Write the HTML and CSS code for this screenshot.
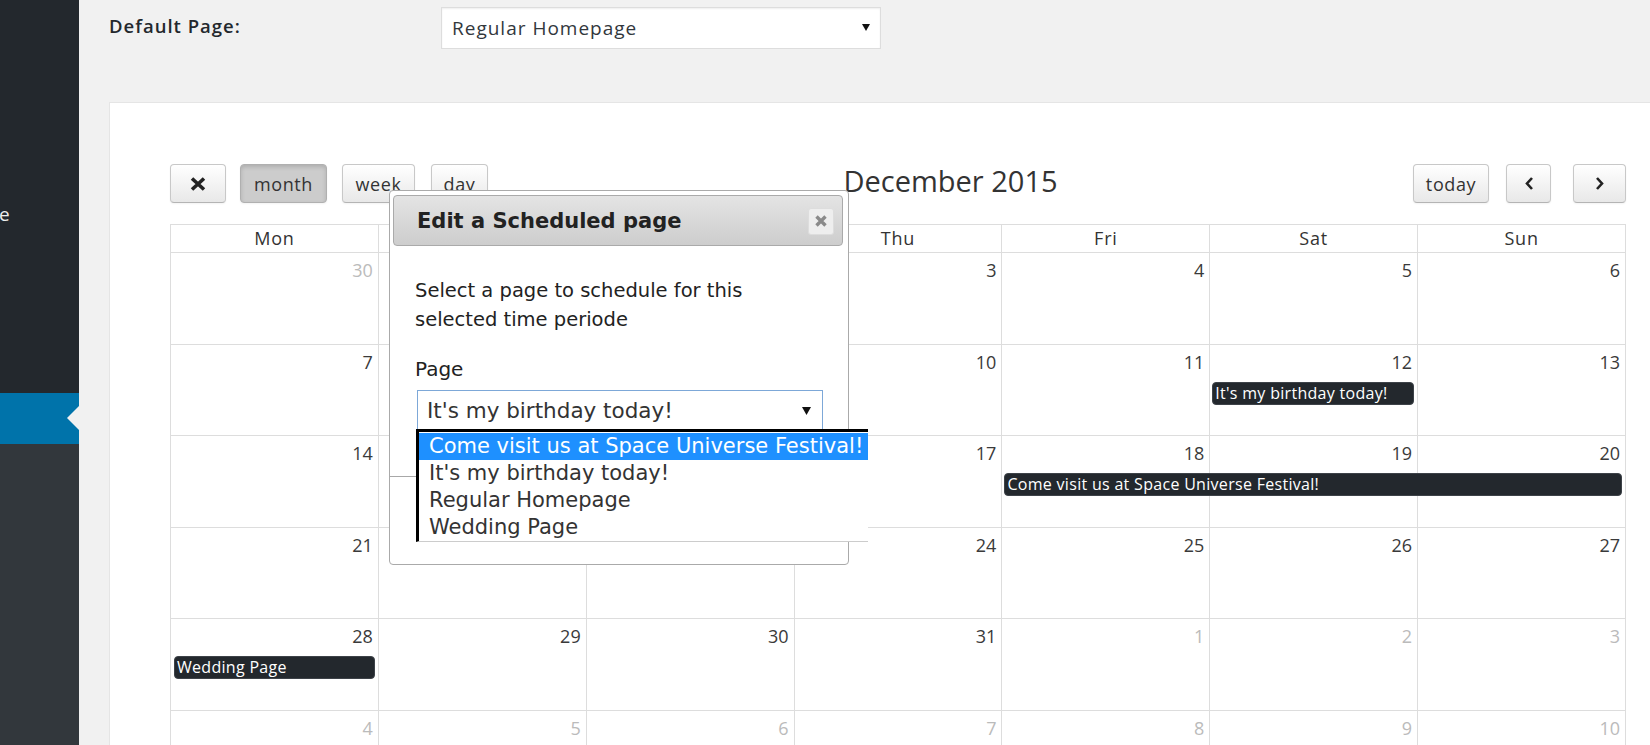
FILE: index.html
```html
<!DOCTYPE html>
<html>
<head>
<meta charset="utf-8">
<link rel="stylesheet" href="styles.css">
</head>
<body>
<div class="layout">
  <aside class="sidebar">
    <div class="side-top">
      <div class="side-item"><span class="side-label">e</span></div>
    </div>
    <div class="side-current"><span class="side-arrow"></span></div>
    <div class="side-sub"></div>
  </aside>
  <main class="main">
    <div class="setting-row">
      <label class="setting-label">Default Page:</label>
      <div class="select-box">
        <span>Regular Homepage</span>
        <svg class="caret" width="8" height="8" viewBox="0 0 8 8"><path d="M0 1h8L4 8z" fill="#111"/></svg>
      </div>
    </div>
    <section class="card">
      <div class="toolbar">
        <div class="tb-left">
          <button class="btn btn-x"><svg width="16" height="14" viewBox="0 0 16 14"><path d="M2 1.5L14 12.5M14 1.5L2 12.5" stroke="#222" stroke-width="3.6" stroke-linecap="butt"/></svg></button>
          <button class="btn btn-month active">month</button>
          <button class="btn btn-week">week</button>
          <button class="btn btn-day">day</button>
        </div>
        <h2 class="tb-title">December 2015</h2>
        <div class="tb-right">
          <button class="btn btn-today">today</button>
          <button class="btn btn-prev"><svg width="10" height="13" viewBox="0 0 10 13"><path d="M8 1L3 6.5l5 5.5" fill="none" stroke="#222" stroke-width="2.6"/></svg></button>
          <button class="btn btn-next"><svg width="10" height="13" viewBox="0 0 10 13"><path d="M2 1l5 5.5-5 5.5" fill="none" stroke="#222" stroke-width="2.6"/></svg></button>
        </div>
      </div>
      <div class="cal">
        <div class="cal-head">
          <div class="hcell">Mon</div><div class="hcell">Tue</div><div class="hcell">Wed</div><div class="hcell">Thu</div><div class="hcell">Fri</div><div class="hcell">Sat</div><div class="hcell">Sun</div>
        </div>
        <div class="week">
          <div class="day other"><span>30</span></div><div class="day"><span>1</span></div><div class="day"><span>2</span></div><div class="day"><span>3</span></div><div class="day"><span>4</span></div><div class="day"><span>5</span></div><div class="day"><span>6</span></div>
        </div>
        <div class="week">
          <div class="day"><span>7</span></div><div class="day"><span>8</span></div><div class="day"><span>9</span></div><div class="day"><span>10</span></div><div class="day"><span>11</span></div><div class="day"><span>12</span></div><div class="day"><span>13</span></div>
          <div class="event ev-sat">It's my birthday today!</div>
        </div>
        <div class="week">
          <div class="day"><span>14</span></div><div class="day"><span>15</span></div><div class="day"><span>16</span></div><div class="day"><span>17</span></div><div class="day"><span>18</span></div><div class="day"><span>19</span></div><div class="day"><span>20</span></div>
          <div class="event ev-fri3">Come visit us at Space Universe Festival!</div>
        </div>
        <div class="week">
          <div class="day"><span>21</span></div><div class="day"><span>22</span></div><div class="day"><span>23</span></div><div class="day"><span>24</span></div><div class="day"><span>25</span></div><div class="day"><span>26</span></div><div class="day"><span>27</span></div>
        </div>
        <div class="week">
          <div class="day"><span>28</span></div><div class="day"><span>29</span></div><div class="day"><span>30</span></div><div class="day"><span>31</span></div><div class="day other"><span>1</span></div><div class="day other"><span>2</span></div><div class="day other"><span>3</span></div>
          <div class="event ev-mon">Wedding Page</div>
        </div>
        <div class="week">
          <div class="day other"><span>4</span></div><div class="day other"><span>5</span></div><div class="day other"><span>6</span></div><div class="day other"><span>7</span></div><div class="day other"><span>8</span></div><div class="day other"><span>9</span></div><div class="day other"><span>10</span></div>
        </div>
      </div>
    </section>
  </main>
</div>

<div class="dialog">
  <div class="dlg-title">
    <span>Edit a Scheduled page</span>
    <button class="dlg-close"><svg width="14" height="14" viewBox="0 0 14 14"><path d="M2.5 2.5l9 9M11.5 2.5l-9 9" stroke="#8a8a8a" stroke-width="3.4"/></svg></button>
  </div>
  <div class="dlg-body">
    <p class="dlg-text">Select a page to schedule for this selected time periode</p>
    <div class="dlg-label">Page</div>
    <div class="dlg-select">
      <span>It's my birthday today!</span>
      <svg width="9" height="9" viewBox="0 0 9 9"><path d="M0 1h9L4.5 9z" fill="#111"/></svg>
    </div>
  </div>
  <div class="dlg-buttons"></div>
  <ul class="dropdown">
    <li class="sel">Come visit us at Space Universe Festival!</li>
    <li>It's my birthday today!</li>
    <li>Regular Homepage</li>
    <li>Wedding Page</li>
  </ul>
</div>
</body>
</html>
```

FILE: styles.css
```css
* { box-sizing: border-box; }
html, body { margin: 0; padding: 0; }
body {
  width: 1650px;
  height: 745px;
  overflow: hidden;
  background: #f1f1f1;
  font-family: "Open Sans", "Liberation Sans", sans-serif;
  color: #333;
  position: relative;
}
.layout { display: flex; height: 745px; overflow: hidden; }

/* sidebar */
.sidebar { width: 79px; flex: none; display: flex; flex-direction: column; }
.side-top { height: 393px; background: #23282d; padding-top: 202px; }
.side-item { color: #eee; font-size: 19px; line-height: 24px; overflow: hidden; }
.side-label { display: block; margin-left: -1px; }
.side-current { height: 51px; background: #0073aa; position: relative; }
.side-arrow {
  position: absolute; right: 0; top: 13px;
  width: 0; height: 0;
  border-top: 12px solid transparent;
  border-bottom: 12px solid transparent;
  border-right: 12px solid #f1f1f1;
}
.side-sub { flex: 1; background: #32373c; }

/* main */
.main { flex: 1; padding-left: 30px; min-width: 0; }
.setting-row { display: flex; align-items: center; height: 54px; padding-top: 4px; padding-bottom: 2px; }
.setting-label { width: 332px; font-size: 18.5px; letter-spacing: 1px; font-weight: 600; color: #23282d; padding-bottom: 6px; }
.select-box {
  width: 440px; height: 42px;
  background: #fff; border: 1px solid #ddd;
  box-shadow: inset 0 1px 2px rgba(0,0,0,.07);
  display: flex; align-items: center; justify-content: space-between;
  padding: 0 10px 0 10px;
  font-size: 19px; letter-spacing: 1px; color: #32373c;
}
.select-box .caret { margin-bottom: 2px; }

.card {
  margin-top: 48px;
  width: 1600px;
  height: 700px;
  background: #fff;
  border: 1px solid #e5e5e5;
  padding: 61px 0 0 60px;
}

/* toolbar */
.toolbar { width: 1456px; display: flex; align-items: center; height: 39px; margin-bottom: 21px; }
.tb-left, .tb-right { display: flex; align-items: center; }
.tb-title { flex: 1; text-align: center; margin: 0; font-size: 29px; font-weight: 400; color: #333; line-height: 1; padding-bottom: 6px; }
.btn {
  height: 39px;
  border: 1px solid #c8c8c8;
  border-bottom-color: #b4b4b4;
  border-radius: 4px;
  background: linear-gradient(#ffffff, #e8e8e8);
  box-shadow: inset 0 1px 0 rgba(255,255,255,.2), 0 1px 2px rgba(0,0,0,.05);
  font-family: "Open Sans", "Liberation Sans", sans-serif;
  font-size: 18px;
  letter-spacing: 0.6px;
  color: #333;
  padding: 0;
  display: flex; align-items: center; justify-content: center;
}
.btn-x { width: 56px; }
.btn-month { width: 87px; margin-left: 14px; }
.btn-week { width: 73px; margin-left: 15px; }
.btn-day { width: 57px; margin-left: 16px; }
.btn.active {
  background: #cccccc;
  border-color: #b0b0b0;
  box-shadow: inset 0 2px 4px rgba(0,0,0,.15), 0 1px 2px rgba(0,0,0,.05);
}
.btn-today { width: 76px; }
.btn-prev { width: 45px; margin-left: 17px; }
.btn-next { width: 53px; margin-left: 22px; }

/* calendar */
.cal { width: 1456px; border-left: 1px solid #ddd; border-top: 1px solid #ddd; }
.cal-head { display: grid; grid-template-columns: repeat(7, 1fr); }
.hcell {
  height: 28px; border-right: 1px solid #ddd; border-bottom: 1px solid #ddd;
  text-align: center; font-size: 18px; letter-spacing: 0.8px; line-height: 27px; color: #333;
}
.week {
  display: grid;
  grid-template-columns: repeat(7, 1fr);
  grid-template-rows: 37px 23px 1fr;
  height: 91.6px;
}
.day {
  grid-row: 1 / span 3;
  border-right: 1px solid #ddd; border-bottom: 1px solid #ddd;
  text-align: right; padding: 5px 5px 0 0;
  font-size: 18px; line-height: 24px; color: #3a3a3a;
}
.day:nth-child(1) { grid-column: 1; }
.day:nth-child(2) { grid-column: 2; }
.day:nth-child(3) { grid-column: 3; }
.day:nth-child(4) { grid-column: 4; }
.day:nth-child(5) { grid-column: 5; }
.day:nth-child(6) { grid-column: 6; }
.day:nth-child(7) { grid-column: 7; }
.day.other { color: #bbb; }
.event {
  grid-row: 2;
  margin: 0 4px 0 2px;
  background: #23282d;
  border: 1px solid #3d4248;
  border-radius: 4px;
  color: #fff;
  font-size: 16px;
  letter-spacing: 0.3px;
  line-height: 21px;
  padding: 0 2px;
  white-space: nowrap;
  overflow: hidden;
  z-index: 1;
}
.ev-sat { grid-column: 6 / span 1; }
.ev-fri3 { grid-column: 5 / span 3; }
.ev-mon { grid-column: 1 / span 1; margin-left: 3px; }

/* dialog */
.dialog {
  position: absolute;
  left: 389px; top: 190px;
  width: 460px; height: 375px;
  background: #fff;
  border: 1px solid #aaa;
  border-radius: 4px;
  padding: 4px 5px 0 3px;
  font-family: "DejaVu Sans", Verdana, sans-serif;
  color: #222;
  z-index: 10;
}
.dlg-title {
  height: 51px;
  border: 1px solid #aaa;
  border-radius: 4px;
  background: linear-gradient(#e4e4e4, #cdcdcd);
  display: flex; align-items: center; justify-content: space-between;
  padding: 0 8px 0 23px;
  font-weight: bold; font-size: 21px; color: #222;
}
.dlg-close {
  width: 26px; height: 27px;
  border: 1px solid #ddd;
  border-radius: 3px;
  background: #eeeeee;
  padding: 0;
  display: flex; align-items: center; justify-content: center;
  margin-top: 1px;
}
.dlg-body { padding: 31px 0 0 22px; }
.dlg-text { margin: 0; width: 380px; font-size: 19.5px; line-height: 28.5px; color: #222; }
.dlg-label { margin-top: 21px; font-size: 20px; line-height: 28px; color: #222; }
.dlg-select {
  margin: 7px 0 0 2px;
  width: 406px; height: 42px;
  border: 1px solid #7da8d8;
  display: flex; align-items: center; justify-content: space-between;
  padding: 0 11px 2px 9px;
  font-size: 21.5px; color: #333;
}
.dlg-buttons {
  position: absolute; left: 0; right: 0; top: 285px;
  border-top: 1px solid #a8a8a8;
}
.dropdown {
  position: absolute;
  left: 26px; top: 238px;
  width: 452px; height: 113px;
  margin: 0; padding: 1px 0 0 0;
  list-style: none;
  background: #fff;
  border-top: 3px solid #000;
  border-left: 3px solid #000;
  border-bottom: 1px solid #ccc;
  font-size: 21px;
  color: #333;
  overflow: hidden;
  z-index: 11;
}
.dropdown li { height: 27px; line-height: 26px; padding-left: 10px; white-space: nowrap; }
.dropdown li.sel { background: #1e90ff; color: #fff; }
```
